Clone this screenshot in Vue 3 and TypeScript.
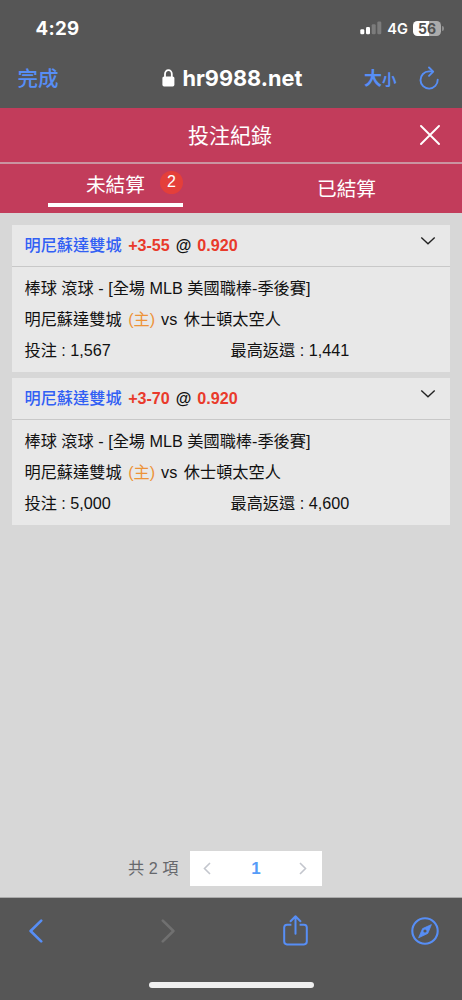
<script setup lang="ts">
interface Bet {
  team: string
  line: string
  odds: string
  stake: string
  payout: string
}

const bets: Bet[] = [
  { team: '明尼蘇達雙城', line: '+3-55', odds: '0.920', stake: '1,567', payout: '1,441' },
  { team: '明尼蘇達雙城', line: '+3-70', odds: '0.920', stake: '5,000', payout: '4,600' },
]
</script>

<template>
  <div class="phone">
    <header class="chrome">
      <div class="status">
        <span class="time">4:29</span>
        <div class="indicators">
          <svg class="signal" width="22" height="14" viewBox="0 0 22 14">
            <rect x="0.3" y="8.3" width="4" height="5" rx="1.2" fill="#fff" />
            <rect x="6" y="6" width="4" height="7.3" rx="1.2" fill="#fff" />
            <rect x="11.7" y="3.2" width="4" height="10.1" rx="1.2" fill="#7c7c7c" />
            <rect x="17.3" y="0.5" width="4" height="12.8" rx="1.2" fill="#7c7c7c" />
          </svg>
          <span class="network">4G</span>
          <div class="battery"><span>56</span></div>
          <i class="battery-tip"></i>
        </div>
      </div>
      <div class="address">
        <span class="done">完成</span>
        <div class="site">
          <svg width="13" height="18" viewBox="0 0 13 18">
            <path d="M3 8V5a3.4 3.9 0 0 1 6.8 0v3" fill="none" stroke="#fff" stroke-width="1.8" />
            <rect x="0.4" y="7.4" width="12" height="10" rx="1.7" fill="#fff" />
          </svg>
          <span>hr9988.net</span>
        </div>
        <span class="text-size"><b>大</b><b class="small">小</b></span>
        <svg class="reload" width="22" height="24" viewBox="0 0 22 24" fill="none" stroke="#578ef5" stroke-width="1.9" stroke-linecap="round" stroke-linejoin="round">
          <path d="M14.4 5.4H11A8.6 8.6 0 1 0 19.7 13.8" />
          <path d="M11 1.5l4.2 4.1-4.2 4.2" />
        </svg>
      </div>
    </header>

    <div class="title-bar">
      <h1>投注紀錄</h1>
      <svg class="close" width="20" height="20" viewBox="0 0 20 20" stroke="#fff" stroke-width="1.9" stroke-linecap="round">
        <path d="M1 1l18 18M19 1L1 19" />
      </svg>
    </div>

    <nav class="tabs">
      <div class="tab active">
        <span>未結算</span><span class="badge">2</span>
      </div>
      <div class="tab"><span>已結算</span></div>
    </nav>

    <main class="content">
      <section v-for="bet in bets" :key="bet.line" class="card">
        <div class="card-head">
          <span class="team">{{ bet.team }}</span>
          <span class="red line">{{ bet.line }}</span>
          <span class="at">@</span>
          <span class="red">{{ bet.odds }}</span>
          <svg class="chevron" width="16" height="10" viewBox="0 0 16 10" fill="none" stroke="#222" stroke-width="1.4">
            <path d="M1.3 1.5L8 7.8l6.7-6.3" />
          </svg>
        </div>
        <div class="card-body">
          <p>棒球 滾球 - [全場 MLB 美國職棒-季後賽]</p>
          <p>
            <span>明尼蘇達雙城</span><span class="home">(主)</span><span class="vs">vs</span><span>休士頓太空人</span>
          </p>
          <p class="amounts">
            <span>投注 : {{ bet.stake }}</span><span>最高返還 : {{ bet.payout }}</span>
          </p>
        </div>
      </section>

      <div class="pagination">
        <span class="total">共 2 項</span>
        <div class="pager">
          <svg width="8" height="13" viewBox="0 0 8 13" fill="none" stroke="#c3c6cd" stroke-width="1.6"><path d="M7 1L1.5 6.5 7 12" /></svg>
          <b>1</b>
          <svg width="8" height="13" viewBox="0 0 8 13" fill="none" stroke="#c3c6cd" stroke-width="1.6"><path d="M1 1l5.5 5.5L1 12" /></svg>
        </div>
      </div>
    </main>

    <footer class="toolbar">
      <div class="tools">
        <svg width="14" height="24" viewBox="0 0 14 24" fill="none" stroke="#578ef5" stroke-width="2.6" stroke-linecap="round" stroke-linejoin="round"><path d="M12.2 1.6L1.6 12l10.6 10.4" /></svg>
        <svg class="forward" width="14" height="24" viewBox="0 0 14 24" fill="none" stroke="#707070" stroke-width="2.6" stroke-linecap="round" stroke-linejoin="round"><path d="M1.8 1.6L12.4 12 1.8 22.4" /></svg>
        <svg class="share" width="25" height="31" viewBox="0 0 25 31" fill="none" stroke="#578ef5" stroke-width="2" stroke-linejoin="round">
          <path d="M8.4 9.8H4a2.8 2.8 0 0 0-2.8 2.8v14A2.8 2.8 0 0 0 4 29.4h17a2.8 2.8 0 0 0 2.8-2.8v-14A2.8 2.8 0 0 0 21 9.8h-4.4" />
          <path d="M12.5 18.8V1.4M7.6 6.2l4.9-4.9 4.9 4.9" stroke-linecap="round" />
        </svg>
        <svg class="compass" width="28" height="28" viewBox="0 0 28 28">
          <circle cx="14" cy="14" r="12.7" fill="none" stroke="#578ef5" stroke-width="2.1" />
          <path d="M20.4 7.6L16.8 16.4 7.6 20.8l4-9.2z" fill="#578ef5" stroke="#578ef5" stroke-width="0.8" stroke-linejoin="round" />
          <circle cx="14" cy="14" r="1.6" fill="#565656" />
        </svg>
      </div>
      <div class="home-bar"></div>
    </footer>
  </div>
</template>

<style>
html,
body {
  margin: 0;
}
</style>

<style scoped>
.phone {
  width: 462px;
  height: 1000px;
  display: flex;
  flex-direction: column;
  overflow: hidden;
  background: #d7d7d7;
  font-family: "Liberation Sans", "Noto Sans CJK TC", sans-serif;
  color: #111;
}
.phone * {
  box-sizing: border-box;
}
svg {
  display: block;
  flex: none;
}
.chrome {
  height: 108px;
  flex: none;
  background: #565656;
  color: #fff;
  font-family: Inter, "Noto Sans CJK TC", sans-serif;
}
.status {
  height: 56px;
  padding: 0 18px 0 35.5px;
  display: flex;
  justify-content: space-between;
  align-items: center;
}
.time {
  font-size: 18.7px;
  font-weight: 700;
  letter-spacing: 0.3px;
}
.indicators {
  display: flex;
  align-items: center;
}
.network {
  margin: 1px 5px 0 5px;
  font-size: 14.6px;
  font-weight: 600;
  line-height: 16px;
}
.battery {
  width: 28px;
  height: 15px;
  border-radius: 4.5px;
  background: linear-gradient(90deg, #fff 56%, #ababab 56%);
  color: #505050;
  font-size: 14px;
  font-weight: 700;
  line-height: 15px;
  text-align: center;
}
.battery-tip {
  width: 2px;
  height: 5px;
  margin-left: 1px;
  border-radius: 0 2px 2px 0;
  background: #8e8e8e;
}
.address {
  height: 44px;
  padding: 0 22px 0 17.5px;
  display: flex;
  align-items: center;
}
.done {
  color: #578ef5;
  font-size: 20.5px;
  font-weight: 500;
  width: 144px;
  padding-bottom: 3px;
}
.site {
  display: flex;
  align-items: center;
  gap: 8px;
  width: 202.5px;
  font-size: 21.7px;
  font-weight: 700;
  padding-bottom: 1px;
}
.text-size {
  width: 54px;
  color: #578ef5;
  font-size: 18px;
  display: flex;
  align-items: baseline;
  padding-bottom: 2px;
}
.text-size .small {
  font-size: 14.5px;
}
.title-bar {
  height: 56px;
  flex: none;
  padding: 0 22px 0 188px;
  display: flex;
  align-items: center;
  justify-content: space-between;
  background: #c23c5b;
  border-bottom: 2px solid #ca94a1;
  color: #fff;
}
h1 {
  margin: 0;
  padding-top: 2px;
  font-size: 21px;
  font-weight: 400;
  line-height: 30px;
}
.close {
  margin-bottom: 1px;
}
.tabs {
  height: 49px;
  flex: none;
  display: flex;
  background: #c23c5b;
  color: #fff;
  font-size: 19.7px;
  line-height: 28px;
}
.tab {
  flex: 1;
  display: flex;
  justify-content: center;
  padding-top: 11px;
}
.active {
  flex: none;
  width: 135px;
  height: 43px;
  margin: 0 48px;
  padding-top: 7px;
  justify-content: flex-end;
  border-bottom: 4px solid #fff;
}
.badge {
  width: 23px;
  height: 23px;
  margin: 0 0 0 15px;
  border-radius: 50%;
  background: #e43f3a;
  font-size: 16px;
  line-height: 22px;
  text-align: center;
}
.content {
  flex: 1;
  padding: 12px 12px 11px;
  display: flex;
  flex-direction: column;
  gap: 6px;
  font-size: 16.2px;
  border-bottom: 1px solid #aaa;
}
.card {
  height: 147px;
  background: #e8e8e8;
}
.card-head {
  height: 42px;
  padding: 0 14px 0 12.5px;
  display: flex;
  align-items: center;
  border-bottom: 1px solid #c8c8c8;
  font-weight: 700;
}
.team {
  color: #315ff4;
  margin-right: 6.5px;
  padding-bottom: 3px;
  font-weight: 500;
}
.red {
  color: #e93a2b;
  font-size: 16.1px;
}
.line {
  margin-right: 6px;
}
.at {
  margin-right: 6px;
  font-size: 16px;
}
.chevron {
  margin: 0 0 10px auto;
}
.card-body {
  padding: 6px 12.5px 0;
}
p {
  margin: 0;
  height: 31px;
  line-height: 31px;
  display: flex;
  white-space: pre;
}
.home {
  margin: 0 6px 0 6.5px;
  color: #ed9338;
}
.vs {
  margin-right: 6.5px;
}
.amounts span:first-child {
  width: 206px;
}
.pagination {
  margin-top: auto;
  padding-left: 116px;
  display: flex;
  align-items: center;
  color: #66686c;
}
.total {
  width: 62px;
  padding-bottom: 3px;
  font-size: 16.2px;
}
.pager {
  width: 132px;
  height: 35px;
  padding: 0 15px 0 13px;
  display: flex;
  align-items: center;
  justify-content: space-between;
  background: #fff;
}
.pager b {
  padding-left: 2px;
  color: #559cf8;
  font-size: 17px;
}
.toolbar {
  height: 102px;
  flex: none;
  padding-top: 16px;
  background: #565656;
}
.tools {
  height: 33px;
  padding: 0 23px 0 29px;
  display: flex;
  align-items: center;
}
.forward {
  margin-left: 118px;
}
.share {
  margin-left: 108px;
}
.compass {
  margin-left: auto;
}
.home-bar {
  width: 165px;
  height: 6px;
  margin: 35px auto 0;
  border-radius: 3px;
  background: #efefef;
}
</style>
